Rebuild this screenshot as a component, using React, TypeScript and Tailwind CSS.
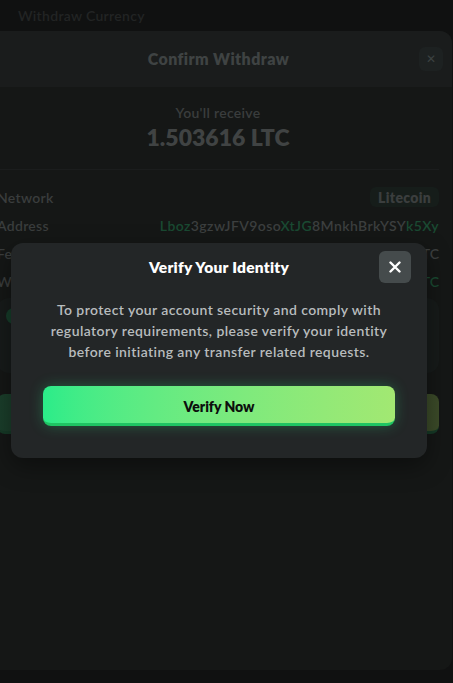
import React from "react";

const font = { fontFamily: "Lato, 'Noto Sans', sans-serif" };

function Row({ label, children }: { label: string; children: React.ReactNode }) {
  return (
    <div className="flex h-[28px] items-center justify-between">
      <span className="text-[14px] font-semibold tracking-[0.3px] text-[#3a3d3d]">{label}</span>
      {children}
    </div>
  );
}

export default function App() {
  return (
    <div className="relative h-[683px] w-[453px] overflow-hidden bg-[#101111]" style={font}>
      <div className="flex h-[31px] items-center px-[18px] text-[14px] font-semibold tracking-[0.3px] text-[#222424]">
        Withdraw Currency
      </div>

      <div className="ml-[-15px] flex h-[639px] w-[467px] flex-col rounded-xl bg-[#151716]">
        <div className="flex h-[56px] items-center rounded-t-xl bg-[#1a1c1c] pr-[9px]">
          <div className="w-[24px]" />
          <div className="flex-1 pl-[9px] text-center text-[16px] font-extrabold tracking-[0.4px] text-[#3f4343]">
            Confirm Withdraw
          </div>
          <button className="flex h-[24px] w-[24px] items-center justify-center rounded-md bg-[#1d2121] text-[12px] text-[#3c4141]">
            ✕
          </button>
        </div>

        <div className="flex flex-col pl-[12px] pr-[13px]">
          <div className="mt-[17px] text-center text-[14px] font-semibold leading-[18px] tracking-[0.3px] text-[#3a3d3d]">
            You'll receive
          </div>
          <div className="text-center text-[23px] font-extrabold leading-[30px] text-[#404343]">
            1.503616 LTC
          </div>
          <div className="mt-[17px] h-px bg-[#1b1d1d]" />
          <div className="mt-[13px] flex flex-col">
            <Row label="Network">
              <span className="flex h-[20px] items-center rounded-md bg-[#161d1a] px-[8px] text-[14px] font-extrabold tracking-[0.3px] text-[#3b3e3e]">
                Litecoin
              </span>
            </Row>
            <Row label="Address">
              <span className="text-[14px] font-semibold tracking-[0.4px] text-[#3c3f3f]">
                <span className="text-[#1a4a32]">Lboz</span>3gzwJFV9oso
                <span className="text-[#1a4a32]">XtJG</span>8MnkhBrkYSY
                <span className="text-[#1a4a32]">k5Xy</span>
              </span>
            </Row>
            <Row label="Fee">
              <span className="text-[14px] font-semibold text-[#3c3f3f]">0.0001 LTC</span>
            </Row>
            <Row label="Withdraw Amount">
              <span className="text-[14px] font-semibold text-[#1a4a32]">1.503716 LTC</span>
            </Row>
          </div>
          <div className="mt-[3px] flex h-[75px] items-start rounded-xl bg-[#171b1a] p-[9px]">
            <div className="mt-[1px] h-[16px] w-[16px] rounded-full bg-[#163d2a]" />
          </div>
          <div className="mt-[21px] h-[40px] rounded-lg border-b-[3px] border-[#163a27] bg-gradient-to-r from-[#1a3e2b] to-[#3c4b29]" />
        </div>
      </div>

      <div className="absolute left-[11px] top-[243px] w-[416px] rounded-xl bg-[#232627] px-[32px] pb-[32px] pt-[8px] shadow-[0_8px_24px_rgba(0,0,0,0.4)]">
        <div className="mr-[-16px] flex h-[32px] items-center">
          <div className="w-[16px]" />
          <div className="flex-1 pt-[2px] text-center text-[15.5px] font-extrabold tracking-[0.25px] text-white">
            Verify Your Identity
          </div>
          <button className="flex h-[32px] w-[32px] items-center justify-center rounded-md bg-[#454b4c] text-white">
            <svg width="12" height="12" viewBox="0 0 12 12">
              <path d="M1.5 1.5L10.5 10.5M10.5 1.5L1.5 10.5" stroke="white" strokeWidth="2.4" strokeLinecap="round" />
            </svg>
          </button>
        </div>
        <p className="mt-[16px] text-center text-[14px] font-semibold leading-[21px] tracking-[0.42px] text-[#b8bcbe]">
          To protect your account security and comply with regulatory requirements, please verify your identity before initiating any transfer related requests.
        </p>
        <button className="mt-[24px] flex h-[40px] w-full items-center justify-center rounded-lg border-b-[3px] border-[#1fc463] bg-gradient-to-r from-[#2aec89] to-[#a2e872] pt-[3px] text-[14px] font-extrabold text-[#0c0f0d] shadow-[0_0_14px_rgba(42,236,137,0.28)]">
          Verify Now
        </button>
      </div>
    </div>
  );
}
